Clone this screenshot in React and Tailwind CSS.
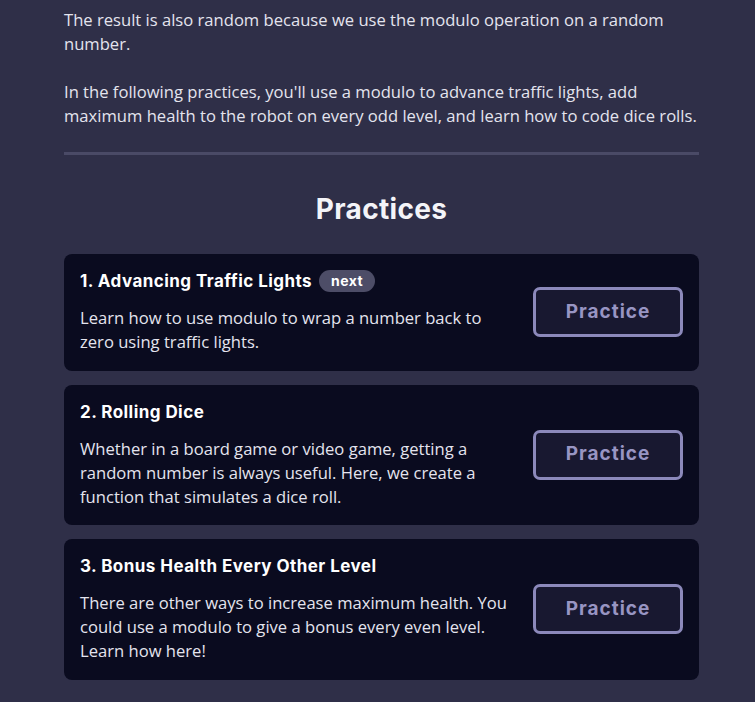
export default function App() {
  const body = { fontFamily: '"Open Sans", "Noto Sans", sans-serif' };
  const head = { fontFamily: 'Inter, "Noto Sans", sans-serif' };
  const cards = [
    {
      title: "1. Advancing Traffic Lights",
      next: true,
      desc: "Learn how to use modulo to wrap a number back to zero using traffic lights.",
    },
    {
      title: "2. Rolling Dice",
      desc: "Whether in a board game or video game, getting a random number is always useful. Here, we create a function that simulates a dice roll.",
    },
    {
      title: "3. Bonus Health Every Other Level",
      desc: "There are other ways to increase maximum health. You could use a modulo to give a bonus every even level. Learn how here!",
    },
  ];
  return (
    <div className="min-h-[702px] w-full bg-[#2f2f48] text-[#e8e8f0]" style={body}>
      <div className="mx-[64px] w-[635px] pt-[8px] pb-[24px]">
        <p className="text-[16.6px] leading-[24px] text-[#e4e4ee]">
          The result is also random because we use the modulo operation on a random number.
        </p>
        <p className="mt-[24px] text-[16.6px] leading-[24px] text-[#e4e4ee]">
          In the following practices, you'll use a modulo to advance traffic lights, add maximum health to the robot on every odd level, and learn how to code dice rolls.
        </p>
        <div className="mt-[24px] h-[3px] w-full bg-[#4a4a66]" />
        <h2
          className="mt-[37px] text-center text-[28px] font-bold leading-[34px] tracking-[0.3px] text-[#f4f4f8]"
          style={head}
        >
          Practices
        </h2>
        <div className="mt-[28px] flex flex-col gap-[14px]">
          {cards.map((c) => (
            <div
              key={c.title}
              className="flex items-center rounded-[8px] bg-[#0a0b1f] px-[16px] pt-[16px] pb-[16.5px]"
            >
              <div className="flex-1 pr-[17px]">
                <div className="flex items-center gap-[7px]">
                  <h3
                    className="text-[17px] font-bold leading-[22px] tracking-[0.45px] text-white"
                    style={head}
                  >
                    {c.title}
                  </h3>
                  {c.next && (
                    <span
                      className="rounded-full bg-[#4d4d67] px-[12px] text-[14px] font-bold leading-[22px] tracking-[0.5px] text-white"
                      style={head}
                    >
                      next
                    </span>
                  )}
                </div>
                <p className="mt-[14px] text-[16.6px] leading-[24px] text-[#e4e4ee]">
                  {c.desc}
                </p>
              </div>
              <button
                className="h-[50px] w-[150px] shrink-0 rounded-[7px] border-[3px] border-[#8c89bb] bg-[#181830] text-[19px] font-bold tracking-[1px] text-[#9895c3]"
                style={head}
              >
                Practice
              </button>
            </div>
          ))}
        </div>
      </div>
    </div>
  );
}
